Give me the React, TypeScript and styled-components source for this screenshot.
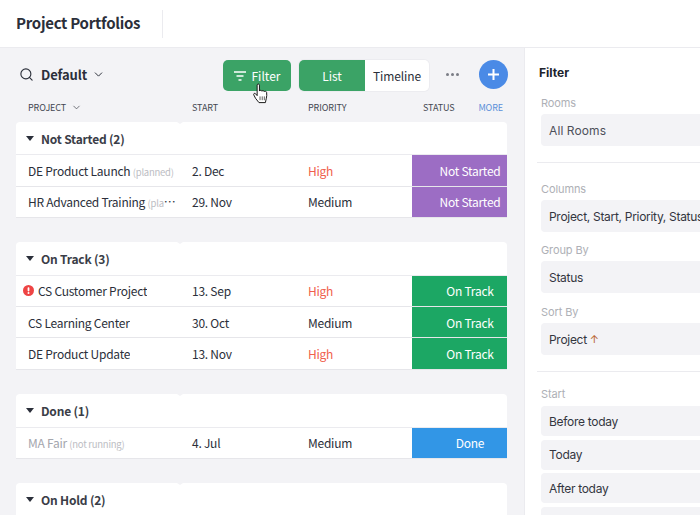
import React from 'react';
import styled, { createGlobalStyle } from 'styled-components';
import { Search, ChevronDown } from 'lucide-react';

const GlobalStyle = createGlobalStyle`
  html, body {
    margin: 0;
    padding: 0;
    height: 515px;
    overflow: hidden;
    background: #fff;
    font-family: "Noto Sans CJK SC", "Noto Sans", sans-serif;
  }
`;

const Page = styled.div`
  width: 700px;
  height: 515px;
  overflow: hidden;
  display: flex;
  flex-direction: column;
  color: #2b2f3a;
`;

const TopBar = styled.header`
  height: 47px;
  flex: none;
  display: flex;
  align-items: center;
  padding: 0 16px;
  background: #fff;
  border-bottom: 1px solid #ebebef;
`;

const PageTitle = styled.h1`
  margin: 0;
  width: 146px;
  height: 28px;
  line-height: 25px;
  font-size: 15px;
  font-weight: 700;
  letter-spacing: -0.28px;
  color: #2b2f3a;
  border-right: 1px solid #ebebef;
`;

const Body = styled.div`
  flex: 1;
  display: flex;
  min-height: 0;
`;

const Main = styled.main`
  width: 524px;
  flex: none;
  box-sizing: border-box;
  background: #f3f3f6;
  padding: 12px 15px 0 16px;
  overflow: hidden;
`;

const Toolbar = styled.div`
  height: 31px;
  display: flex;
  align-items: center;
`;

const ViewName = styled.div`
  display: flex;
  align-items: center;
  flex: none;
  box-sizing: border-box;
  padding-left: 3px;
  margin-bottom: 3px;
  width: 207px;
  font-size: 13px;
  font-weight: 700;
  letter-spacing: -0.1px;
  svg:first-child {
    margin-right: 7px;
  }
  svg:last-child {
    margin-left: 5px;
  }
`;

const FilterButton = styled.button`
  position: relative;
  width: 68px;
  height: 31px;
  flex: none;
  border: 0;
  padding: 0;
  border-radius: 5px;
  background: #3ba366;
  color: #fff;
  display: flex;
  align-items: center;
  justify-content: center;
  gap: 6px;
  font-family: inherit;
  font-size: 12px;
`;

const Cursor = styled.svg`
  position: absolute;
  left: 29px;
  top: 23px;
`;

const Segments = styled.div`
  margin-left: 8px;
  display: flex;
  height: 31px;
  width: 130px;
  flex: none;
  border-radius: 5px;
  box-shadow: 0 0 0 1px #ececf0;
`;

const Segment = styled.div<{ $active?: boolean }>`
  flex: ${p => (p.$active ? '0 0 66px' : '1')};
  display: flex;
  align-items: center;
  justify-content: center;
  font-size: 12px;
  letter-spacing: -0.1px;
  background: ${p => (p.$active ? '#3ba366' : '#fff')};
  color: ${p => (p.$active ? '#fff' : '#2b2f3a')};
  border-radius: ${p => (p.$active ? '5px 0 0 5px' : '0 5px 5px 0')};
`;

const Dots = styled.div`
  width: 50px;
  flex: none;
  display: flex;
  justify-content: center;
  gap: 2px;
  padding-right: 3px;
  box-sizing: border-box;
  margin-bottom: 2px;
`;

const Dot = styled.span`
  width: 3px;
  height: 3px;
  border-radius: 50%;
  background: #7b7d86;
`;

const AddButton = styled.div`
  width: 29px;
  height: 29px;
  flex: none;
  margin-bottom: 2px;
  border-radius: 50%;
  background: #4a8ae6;
  display: flex;
  align-items: center;
  justify-content: center;
`;

const Columns = styled.div`
  height: 30.8px;
  display: grid;
  grid-template-columns: 176px 116px 104px 95px;
  align-items: center;
  font-size: 9px;
  letter-spacing: -0.1px;
  color: #444751;
  padding-top: 2px;
  box-sizing: border-box;
`;

const ColumnLabel = styled.div`
  padding-left: 12px;
  display: flex;
  align-items: center;
  gap: 5px;
  &:nth-child(n + 2) {
    padding-left: 0;
  }
`;

const StatusLabels = styled.div`
  display: flex;
  justify-content: space-between;
  padding: 0 4px 0 11px;
`;

const MoreLabel = styled.span`
  color: #5b8fd9;
`;

const Group = styled.section`
  position: relative;
  background: #fff;
  border-radius: 4px 4px 0 0;
  margin-bottom: 24.4px;
  width: 491px;
  &::after {
    content: '';
    position: absolute;
    left: 161px;
    top: 0;
    border-left: 3px solid transparent;
    border-right: 3px solid transparent;
    border-top: 2px solid #f3f3f6;
  }
`;

const GroupHead = styled.div`
  height: 33.5px;
  box-sizing: border-box;
  display: flex;
  align-items: center;
  gap: 7px;
  padding-left: 10px;
  font-size: 12px;
  font-weight: 700;
  color: #3a3d47;
  border-bottom: 1px solid #ebebef;
  letter-spacing: -0.2px;
`;

const Caret = styled.span`
  width: 0;
  height: 0;
  border-left: 4px solid transparent;
  border-right: 4px solid transparent;
  border-top: 5px solid #2b2f3a;
`;

const Row = styled.div`
  height: 31.3px;
  box-sizing: border-box;
  display: grid;
  grid-template-columns: 176px 116px 104px 95px;
  align-items: center;
  font-size: 12px;
  letter-spacing: -0.25px;
  color: #2b2f3a;
  border-bottom: 1px solid #e6e6ea;
`;

const NameCell = styled.div<{ $muted?: boolean; $alert?: boolean }>`
  padding-left: ${p => (p.$alert ? '7px' : '12px')};
  padding-right: 16px;
  display: flex;
  align-items: center;
  gap: 4px;
  color: ${p => (p.$muted ? '#a4a6ad' : 'inherit')};
  min-width: 0;
`;

const NameText = styled.div`
  white-space: nowrap;
  overflow: hidden;
  text-overflow: ellipsis;
`;

const Note = styled.span`
  font-size: 9.5px;
  color: #bcbdc3;
`;

const Priority = styled.div<{ $high?: boolean }>`
  color: ${p => (p.$high ? '#f0604d' : 'inherit')};
`;

const Status = styled.div<{ $color: string }>`
  height: 100%;
  background: ${p => p.$color};
  color: #fff;
  display: flex;
  align-items: center;
  justify-content: center;
  padding-left: 21px;
  box-sizing: border-box;
`;

const Panel = styled.aside`
  flex: 1;
  background: #fff;
  border-left: 1px solid #ebebef;
  padding: 17px 0 0 12px;
  overflow: hidden;
  font-family: "Inter", sans-serif;
`;

const PanelTitle = styled.div`
  font-size: 12px;
  font-weight: 700;
  color: #20232c;
  height: 16px;
  line-height: 16px;
  margin: 0 0 15px 2px;
`;

const FieldLabel = styled.div<{ $tight?: boolean }>`
  font-size: 11px;
  letter-spacing: -0.1px;
  color: #aeb0b6;
  height: 14px;
  line-height: 14px;
  margin: 0 0 ${p => (p.$tight ? '5px' : '4px')} 4px;
`;

const Field = styled.div<{ $compact?: boolean; $soft?: boolean }>`
  margin: 0 -20px ${p => (p.$compact ? '3.6px' : '0')} 4px;
  height: ${p => (p.$compact ? '30px' : '32px')};
  border-radius: 4px;
  background: #f3f3f6;
  display: flex;
  align-items: center;
  padding-left: 8px;
  font-size: 12px;
  letter-spacing: ${p => (p.$soft ? '0.1px' : '-0.3px')};
  color: ${p => (p.$soft ? '#4d505a' : '#33363f')};
  white-space: nowrap;
`;

const SortArrow = styled.span`
  color: #b8602a;
  font-size: 11px;
  margin-left: 3px;
`;

const Divider = styled.div<{ $short?: boolean }>`
  height: 1px;
  background: #ebebef;
  margin: 16px -20px ${p => (p.$short ? '15px' : '19px')} 0;
`;

const FieldBlock = styled.div`
  margin-bottom: 11px;
  & + & {
    margin-bottom: 12px;
  }
`;

const ST = { not: '#9c6dc4', track: '#1ca764', done: '#3296e6' };

const groups = [
  {
    title: 'Not Started (2)',
    rows: [
      { name: 'DE Product Launch', note: '(planned)', start: '2. Dec', priority: 'High', status: 'Not Started', color: ST.not },
      { name: 'HR Advanced Training', note: '(planned)', start: '29. Nov', priority: 'Medium', status: 'Not Started', color: ST.not },
    ],
  },
  {
    title: 'On Track (3)',
    rows: [
      { name: 'CS Customer Project', alert: true, start: '13. Sep', priority: 'High', status: 'On Track', color: ST.track },
      { name: 'CS Learning Center', start: '30. Oct', priority: 'Medium', status: 'On Track', color: ST.track },
      { name: 'DE Product Update', start: '13. Nov', priority: 'High', status: 'On Track', color: ST.track },
    ],
  },
  {
    title: 'Done (1)',
    rows: [
      { name: 'MA Fair', muted: true, note: '(not running)', start: '4. Jul', priority: 'Medium', status: 'Done', color: ST.done },
    ],
  },
  { title: 'On Hold (2)', rows: [] },
];

const AlertIcon = () => (
  <svg width="11" height="11" viewBox="0 0 11 11" style={{ flex: 'none' }}>
    <circle cx="5.5" cy="5.5" r="5.5" fill="#ee4444" />
    <rect x="4.6" y="2.2" width="1.8" height="4.2" rx="0.8" fill="#fff" />
    <circle cx="5.5" cy="8" r="1" fill="#fff" />
  </svg>
);

const HandCursor = () => (
  <Cursor width="17" height="22" viewBox="0 0 16 23">
    <path
      d="M4.500 2.200c0-1.500 2.400-1.500 2.400 0v6.200c.4-1 2.200-1 2.500.2.500-.9 2.200-.8 2.500.4.600-.7 2.300-.4 2.500.9.300 2 .2 4.200-.3 6l-1 4.600H6.400L2.800 16 .9 12.300c-.5-1.200 1-2 1.900-1.100l1.700 2z"
      fill="#fff"
      stroke="#111"
      strokeWidth="1"
      strokeLinejoin="round"
    />
    <path d="M7.500 14v4M9.800 14v4M12 14v4" stroke="#111" strokeWidth="0.7" />
  </Cursor>
);

const App: React.FC = () => {
  return (
    <Page>
      <GlobalStyle />
      <TopBar>
        <PageTitle>Project Portfolios</PageTitle>
      </TopBar>
      <Body>
        <Main>
          <Toolbar>
            <ViewName>
              <Search size={15} strokeWidth={1.8} />
              Default
              <ChevronDown size={13} strokeWidth={1.8} />
            </ViewName>
            <FilterButton>
              <svg width="12" height="10" viewBox="0 0 12 10">
                <path d="M0 1h12M2.500 5h7M4.500 9h3" stroke="#fff" strokeWidth="1.500" />
              </svg>
              Filter
              <HandCursor />
            </FilterButton>
            <Segments>
              <Segment $active>List</Segment>
              <Segment>Timeline</Segment>
            </Segments>
            <Dots>
              <Dot />
              <Dot />
              <Dot />
            </Dots>
            <AddButton>
              <svg width="11" height="11" viewBox="0 0 11 11">
                <path d="M5.500 0v11M0 5.500h11" stroke="#fff" strokeWidth="2" />
              </svg>
            </AddButton>
          </Toolbar>
          <Columns>
            <ColumnLabel>
              PROJECT
              <ChevronDown size={11} strokeWidth={1.6} />
            </ColumnLabel>
            <ColumnLabel>START</ColumnLabel>
            <ColumnLabel>PRIORITY</ColumnLabel>
            <StatusLabels>
              <span>STATUS</span>
              <MoreLabel>MORE</MoreLabel>
            </StatusLabels>
          </Columns>
          {groups.map(group => (
            <Group key={group.title}>
              <GroupHead>
                <Caret />
                {group.title}
              </GroupHead>
              {group.rows.map(row => (
                <Row key={row.name}>
                  <NameCell $muted={row.muted} $alert={row.alert}>
                    {row.alert && <AlertIcon />}
                    <NameText>
                      {row.name} {row.note && <Note>{row.note}</Note>}
                    </NameText>
                  </NameCell>
                  <div>{row.start}</div>
                  <Priority $high={row.priority === 'High'}>{row.priority}</Priority>
                  <Status $color={row.color}>{row.status}</Status>
                </Row>
              ))}
            </Group>
          ))}
        </Main>
        <Panel>
          <PanelTitle>Filter</PanelTitle>
          <FieldLabel>Rooms</FieldLabel>
          <Field $soft>All Rooms</Field>
          <Divider />
          <FieldBlock>
            <FieldLabel>Columns</FieldLabel>
            <Field>Project, Start, Priority, Status</Field>
          </FieldBlock>
          <FieldBlock>
            <FieldLabel>Group By</FieldLabel>
            <Field>Status</Field>
          </FieldBlock>
          <FieldLabel>Sort By</FieldLabel>
          <Field>
            Project<SortArrow>↑</SortArrow>
          </Field>
          <Divider $short />
          <FieldLabel $tight>Start</FieldLabel>
          <Field $compact>Before today</Field>
          <Field $compact>Today</Field>
          <Field $compact>After today</Field>
          <Field $compact />
        </Panel>
      </Body>
    </Page>
  );
};

export default App;
